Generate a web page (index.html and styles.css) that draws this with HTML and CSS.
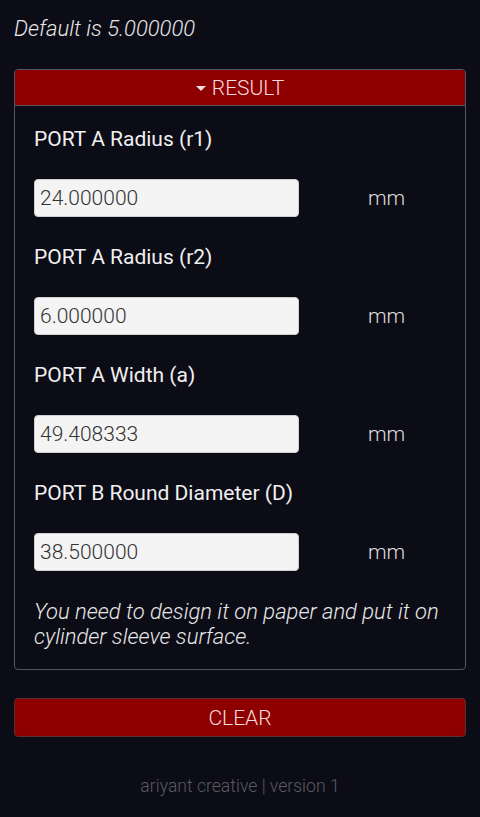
FILE: index.html
```html
<!DOCTYPE html>
<html lang="en">
<head>
  <meta charset="UTF-8" />
  <meta name="viewport" content="width=device-width, initial-scale=1" />
  <title>Port Calculator</title>
  <link rel="stylesheet" href="styles.css">
</head>
<body>

<p class="hint">Default is 5.000000</p>

<details class="result" open>
  <summary class="result-title">RESULT</summary>
  <div class="result-body">
    <div class="field">
      <label class="field-label">PORT A Radius (r1)</label>
      <div class="field-row">
        <input class="field-input" type="text" value="24.000000" readonly>
        <span class="unit">mm</span>
      </div>
    </div>
    <div class="field">
      <label class="field-label">PORT A Radius (r2)</label>
      <div class="field-row">
        <input class="field-input" type="text" value="6.000000" readonly>
        <span class="unit">mm</span>
      </div>
    </div>
    <div class="field">
      <label class="field-label">PORT A Width (a)</label>
      <div class="field-row">
        <input class="field-input" type="text" value="49.408333" readonly>
        <span class="unit">mm</span>
      </div>
    </div>
    <div class="field">
      <label class="field-label">PORT B Round Diameter (D)</label>
      <div class="field-row">
        <input class="field-input" type="text" value="38.500000" readonly>
        <span class="unit">mm</span>
      </div>
    </div>
    <p class="note">You need to design it on paper and put it on cylinder sleeve surface.</p>
  </div>
</details>

<button class="btn-clear">CLEAR</button>

<footer class="footer">ariyant creative | version 1</footer>

</body>
</html>
```

FILE: styles.css
```css
body {
  margin: 0;
  padding: 0 14px;
  background: #0c0c16;
  color: #f2f2f2;
  font-family: Roboto, 'Noto Sans', sans-serif;
  font-size: 21px;
}

.hint {
  margin: 0;
  padding-top: 17px;
  line-height: 24px;
  font-size: 22px;
  font-style: italic;
  font-weight: 300;
  color: #e8e8e8;
}

.result {
  margin-top: 28px;
  border: 1px solid #55555e;
  border-radius: 4px;
  overflow: hidden;
}

.result-title {
  list-style: none;
  display: flex;
  justify-content: center;
  align-items: center;
  gap: 6px;
  height: 35px;
  background: #8e0000;
  border-bottom: 1px solid #55555e;
  color: #f6dcdc;
  font-weight: 300;
  cursor: pointer;
}

.result-title::-webkit-details-marker {
  display: none;
}

.result-title::before {
  content: '';
  border-left: 5px solid transparent;
  border-right: 5px solid transparent;
  border-top: 5px solid #f6dcdc;
  margin-top: 1px;
}

.result-body {
  padding: 21px 19px 20px 19px;
}

.field {
  margin-bottom: 28px;
}

.field-label {
  display: block;
  line-height: 24px;
  margin-bottom: 28px;
  color: #f0f0f0;
}

.field-row {
  display: flex;
  align-items: center;
}

.field-input {
  box-sizing: border-box;
  width: 265px;
  height: 38px;
  padding: 0 5px;
  border: 1px solid #cfcfcf;
  border-radius: 4px;
  background: #f4f4f4;
  color: #333;
  font-family: inherit;
  font-size: 21px;
  font-weight: 300;
  outline: none;
}

.unit {
  margin-left: 69px;
  color: #dddddd;
  font-weight: 300;
}

.note {
  margin: 0;
  line-height: 25px;
  font-size: 22px;
  font-style: italic;
  font-weight: 300;
  color: #e8e8e8;
}

.btn-clear {
  display: block;
  box-sizing: border-box;
  width: 100%;
  height: 39px;
  margin-top: 28px;
  border: 1px solid #5a3030;
  border-radius: 4px;
  background: #8e0000;
  color: #f6dcdc;
  font-family: inherit;
  font-size: 21px;
  font-weight: 300;
  cursor: pointer;
}

.footer {
  margin-top: 39px;
  text-align: center;
  font-size: 17.6px;
  font-weight: 300;
  color: #5a5a62;
}
```
